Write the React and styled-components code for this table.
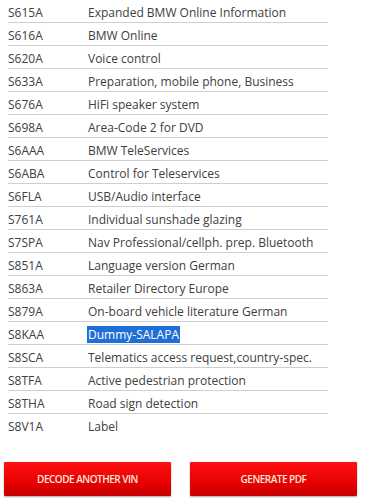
import React from 'react';
import styled, { createGlobalStyle } from 'styled-components';

const options = [
  ['S615A', 'Expanded BMW Online Information'],
  ['S616A', 'BMW Online'],
  ['S620A', 'Voice control'],
  ['S633A', 'Preparation, mobile phone, Business'],
  ['S676A', 'HiFi speaker system'],
  ['S698A', 'Area-Code 2 for DVD'],
  ['S6AAA', 'BMW TeleServices'],
  ['S6ABA', 'Control for Teleservices'],
  ['S6FLA', 'USB/Audio interface'],
  ['S761A', 'Individual sunshade glazing'],
  ['S7SPA', 'Nav Professional/cellph. prep. Bluetooth'],
  ['S851A', 'Language version German'],
  ['S863A', 'Retailer Directory Europe'],
  ['S879A', 'On-board vehicle literature German'],
  ['S8KAA', 'Dummy-SALAPA', true],
  ['S8SCA', 'Telematics access request,country-spec.'],
  ['S8TFA', 'Active pedestrian protection'],
  ['S8THA', 'Road sign detection'],
  ['S8V1A', 'Label'],
];

const GlobalStyle = createGlobalStyle`
  body {
    margin: 0;
    background: #fff;
    font-family: "Open Sans", "Liberation Sans", sans-serif;
  }
`;

const Page = styled.div`
  width: 369px;
  height: 500px;
  overflow: hidden;
  display: flex;
  flex-direction: column;
`;

const Table = styled.div`
  width: 320px;
  margin-left: 8px;
`;

const Row = styled.div`
  display: flex;
  align-items: center;
  height: 23px;
  padding-top: 2px;
  box-sizing: border-box;
  border-bottom: ${p => (p.$last ? 'none' : '1px solid #cfcfcf')};
  font-size: 12px;
  color: #404040;
`;

const Code = styled.span`
  width: 80px;
  flex-shrink: 0;
`;

const Desc = styled.span`
  white-space: nowrap;
  ${p => p.$selected && `
    background: #1f6fd6;
    color: #fff;
    padding: 0 1px;
    margin-left: -1px;
  `}
`;

const Buttons = styled.div`
  display: flex;
  gap: 19px;
  padding: 0 12px 0 4px;
  margin-top: 25px;
`;

const Button = styled.button`
  flex: 1;
  height: 34px;
  border: none;
  border-radius: 1px;
  background: linear-gradient(#ff1010, #e00000 70%, #c40000);
  box-shadow: 0 1px 2px rgba(0, 0, 0, 0.35);
  color: #ffe6d6;
  font-family: "Open Sans", "Liberation Sans", sans-serif;
  font-size: 10px;
  font-weight: 600;
  letter-spacing: -0.5px;
  text-transform: uppercase;
  cursor: pointer;
`;

const App = () => (
  <Page>
    <GlobalStyle />
    <Table>
      {options.map(([code, desc, selected], i) => (
        <Row key={code} $last={i === options.length - 1}>
          <Code>{code}</Code>
          <Desc $selected={selected}>{desc}</Desc>
        </Row>
      ))}
    </Table>
    <Buttons>
      <Button>Decode another VIN</Button>
      <Button>Generate PDF</Button>
    </Buttons>
  </Page>
);

export default App;
